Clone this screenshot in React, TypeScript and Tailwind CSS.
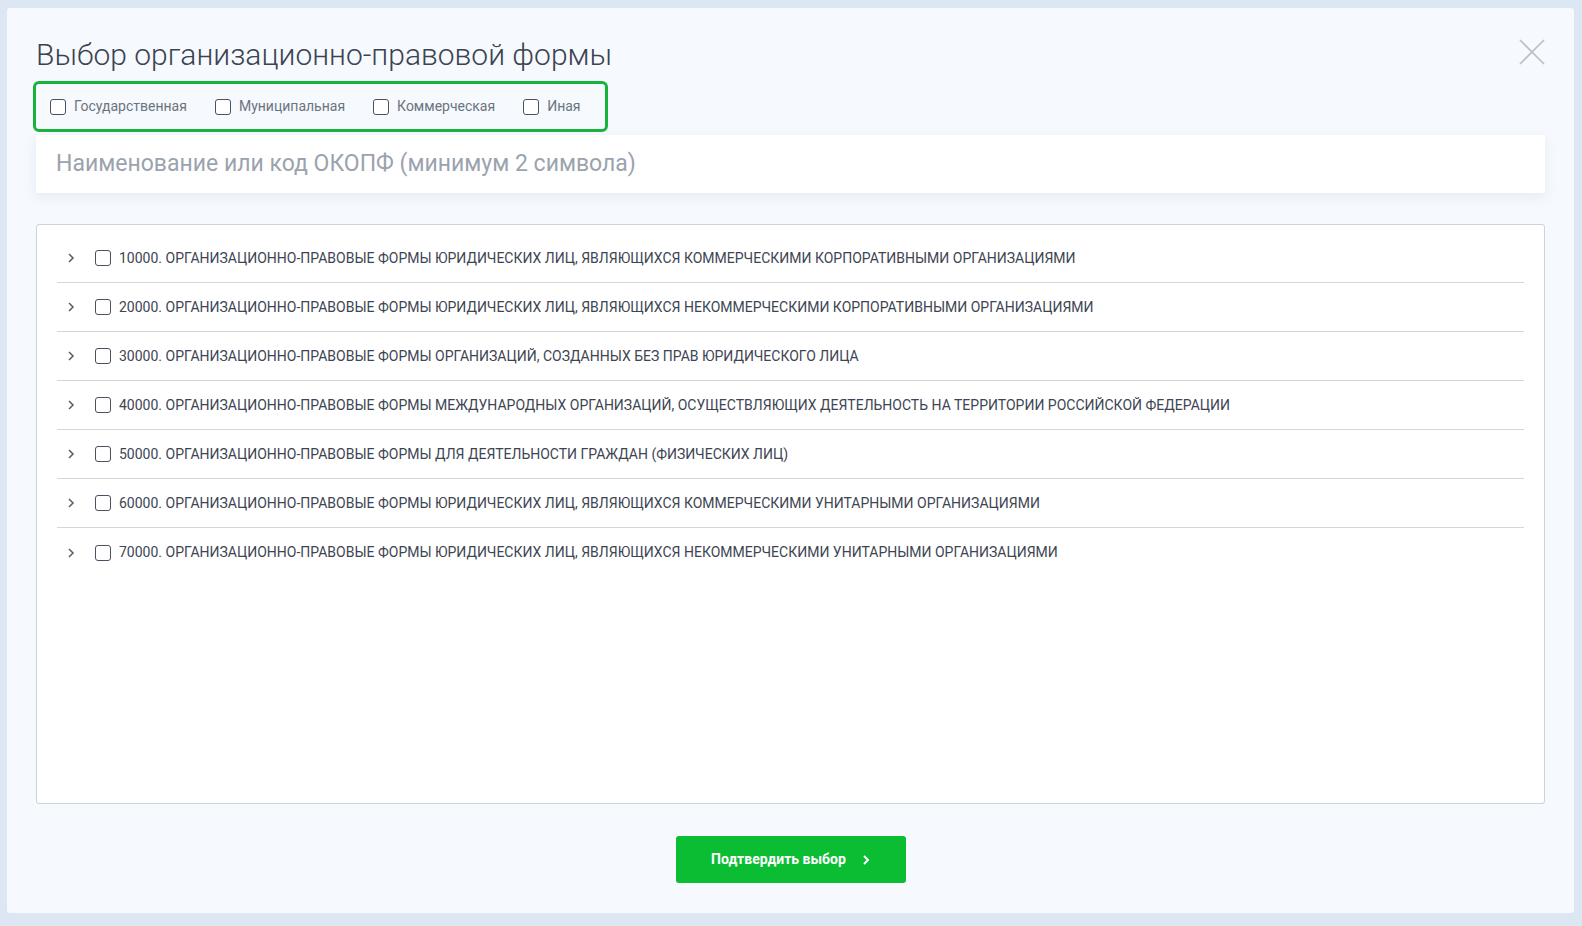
import React from "react";

const rows = [
  "10000. ОРГАНИЗАЦИОННО-ПРАВОВЫЕ ФОРМЫ ЮРИДИЧЕСКИХ ЛИЦ, ЯВЛЯЮЩИХСЯ КОММЕРЧЕСКИМИ КОРПОРАТИВНЫМИ ОРГАНИЗАЦИЯМИ",
  "20000. ОРГАНИЗАЦИОННО-ПРАВОВЫЕ ФОРМЫ ЮРИДИЧЕСКИХ ЛИЦ, ЯВЛЯЮЩИХСЯ НЕКОММЕРЧЕСКИМИ КОРПОРАТИВНЫМИ ОРГАНИЗАЦИЯМИ",
  "30000. ОРГАНИЗАЦИОННО-ПРАВОВЫЕ ФОРМЫ ОРГАНИЗАЦИЙ, СОЗДАННЫХ БЕЗ ПРАВ ЮРИДИЧЕСКОГО ЛИЦА",
  "40000. ОРГАНИЗАЦИОННО-ПРАВОВЫЕ ФОРМЫ МЕЖДУНАРОДНЫХ ОРГАНИЗАЦИЙ, ОСУЩЕСТВЛЯЮЩИХ ДЕЯТЕЛЬНОСТЬ НА ТЕРРИТОРИИ РОССИЙСКОЙ ФЕДЕРАЦИИ",
  "50000. ОРГАНИЗАЦИОННО-ПРАВОВЫЕ ФОРМЫ ДЛЯ ДЕЯТЕЛЬНОСТИ ГРАЖДАН (ФИЗИЧЕСКИХ ЛИЦ)",
  "60000. ОРГАНИЗАЦИОННО-ПРАВОВЫЕ ФОРМЫ ЮРИДИЧЕСКИХ ЛИЦ, ЯВЛЯЮЩИХСЯ КОММЕРЧЕСКИМИ УНИТАРНЫМИ ОРГАНИЗАЦИЯМИ",
  "70000. ОРГАНИЗАЦИОННО-ПРАВОВЫЕ ФОРМЫ ЮРИДИЧЕСКИХ ЛИЦ, ЯВЛЯЮЩИХСЯ НЕКОММЕРЧЕСКИМИ УНИТАРНЫМИ ОРГАНИЗАЦИЯМИ",
];

const Box = () => (
  <span className="inline-block w-[16px] h-[16px] border border-[#4a5260] rounded-[3px] bg-white shrink-0" />
);

export default function App() {
  return (
    <div className="w-[1582px] h-[926px] bg-[#dde7f3] pt-[8px] pl-[7px] font-[Roboto,sans-serif]">
      <div className="w-[1567px] h-[905px] bg-[#f6f9fd] rounded-[3px] relative px-[29px] pt-[27px]">
        <svg className="absolute left-[1512px] top-[31px]" width="26" height="26" viewBox="0 0 26 26">
          <path d="M1 1L25 25M25 1L1 25" stroke="#b8bfc9" strokeWidth="1.6" />
        </svg>
        <h1 className="text-[30px] leading-[40px] font-light text-[#3a4350]">Выбор организационно-правовой формы</h1>
        <div className="mt-[6px] -ml-[3px] w-[575px] h-[51px] border-[3px] border-[#18b33c] rounded-[6px] flex items-center pl-[14px] text-[14px] text-[#6b7480]">
          {["Государственная", "Муниципальная", "Коммерческая", "Иная"].map((t, i) => (
            <label key={t} className={`flex items-center gap-[8px] ${i < 3 ? "mr-[28px]" : ""}`}>
              <Box />
              <span>{t}</span>
            </label>
          ))}
        </div>
        <div className="mt-[3px] h-[58px] bg-white shadow-[0_4px_10px_rgba(180,200,225,0.25)] flex items-center pl-[20px] text-[23px] text-[#9aa3ae]">
          Наименование или код ОКОПФ (минимум 2 символа)
        </div>
        <div className="mt-[31px] h-[580px] bg-white border border-[#cdd3dc] rounded-[3px] px-[20px] pt-[9px]">
          {rows.map((r, i) => (
            <div key={i} className={`h-[49px] flex items-center ${i < rows.length - 1 ? "border-b border-[#d2d7de]" : ""}`}>
              <svg className="ml-[10px] mr-[20px]" width="8" height="12" viewBox="0 0 8 12">
                <path d="M2 2l4 4-4 4" fill="none" stroke="#555d68" strokeWidth="1.5" />
              </svg>
              <Box />
              <span className="ml-[8px] text-[14px] text-[#3d4552]">{r}</span>
            </div>
          ))}
        </div>
        <div className="flex justify-center mt-[32px]">
          <button className="w-[230px] h-[47px] bg-[#0bbd33] rounded-[3px] text-white text-[14px] font-bold flex items-center justify-center gap-[16px]">
            Подтвердить выбор
            <svg width="8" height="12" viewBox="0 0 8 12">
              <path d="M2 2l4 4-4 4" fill="none" stroke="#fff" strokeWidth="2" />
            </svg>
          </button>
        </div>
      </div>
    </div>
  );
}
